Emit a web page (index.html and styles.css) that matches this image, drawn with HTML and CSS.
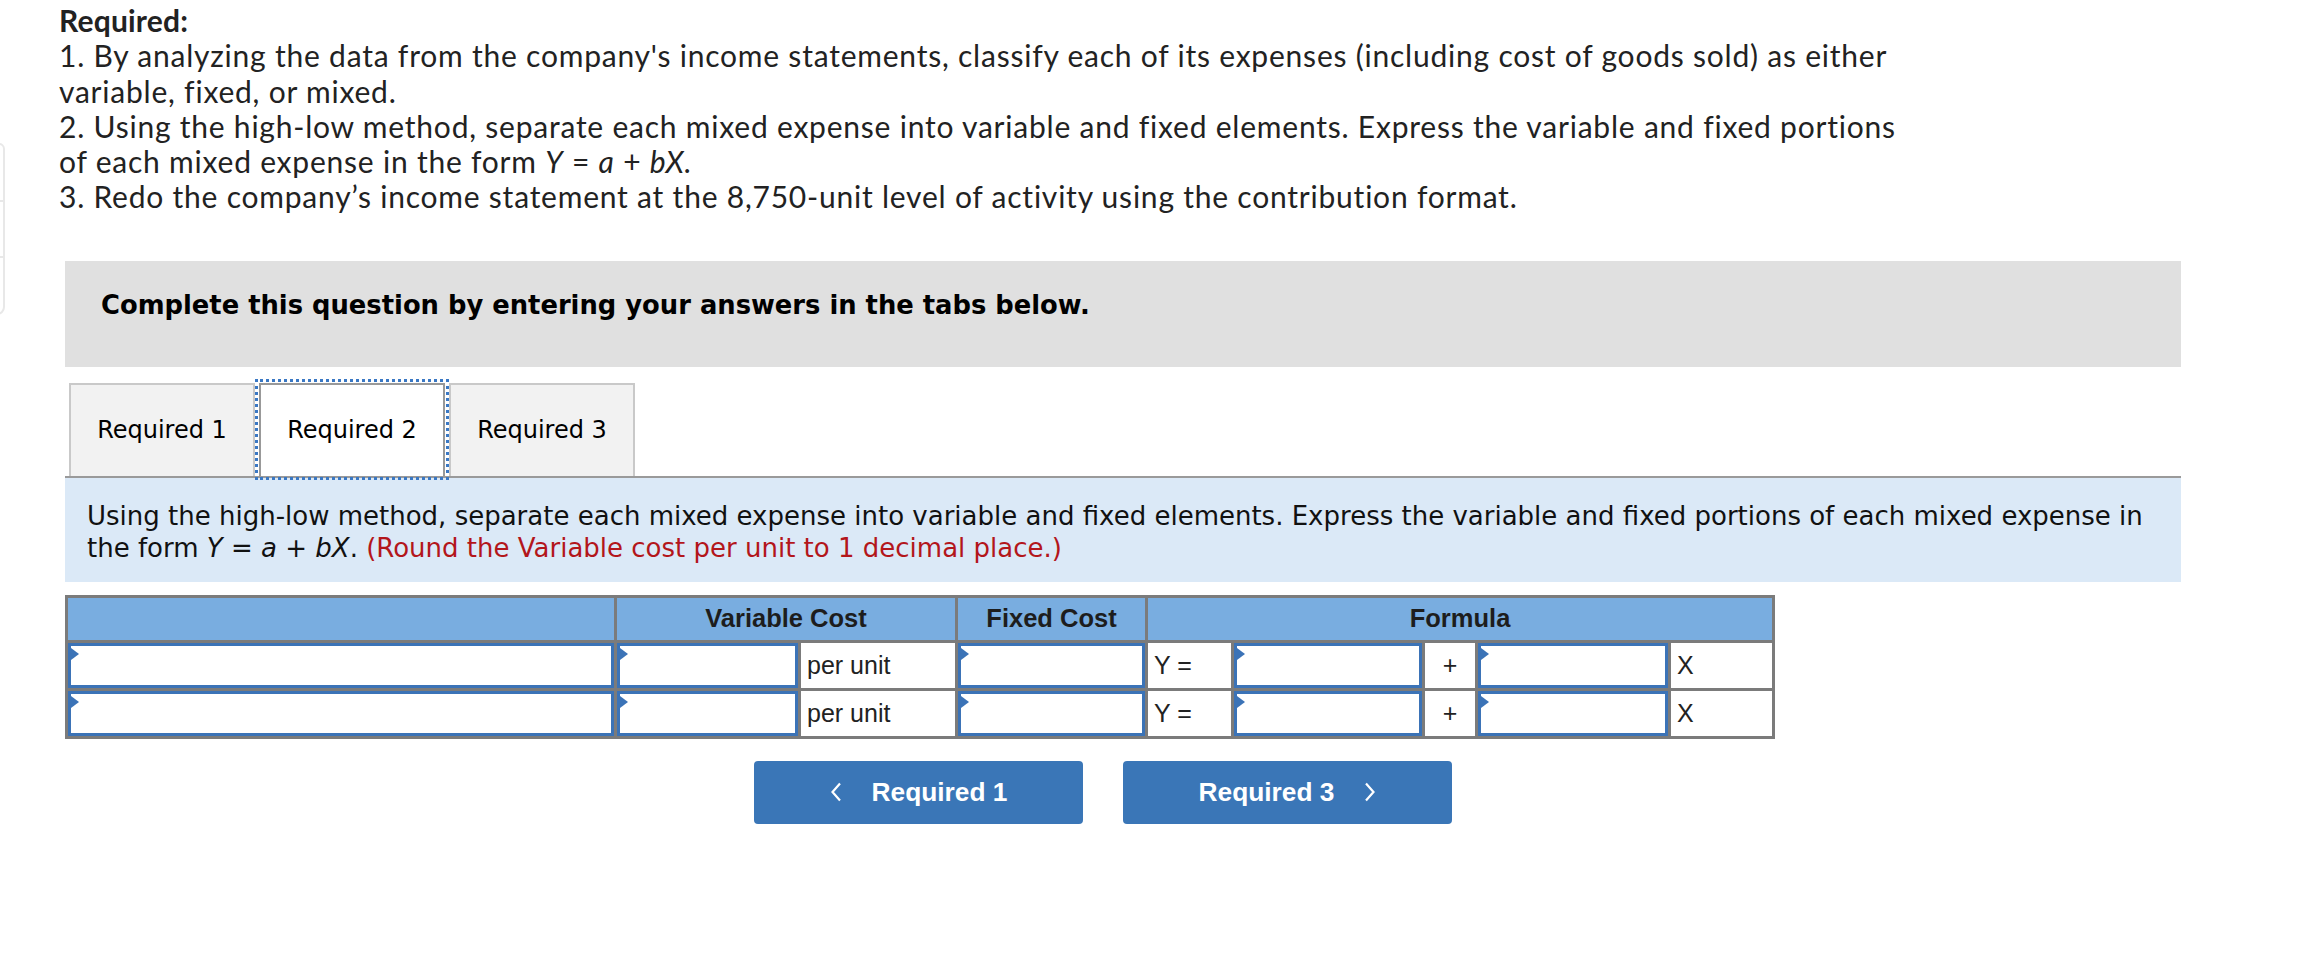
FILE: index.html
```html
<!DOCTYPE html>
<html lang="en">
<head>
<meta charset="utf-8">
<title>Required 2</title>
<link rel="stylesheet" href="styles.css">
</head>
<body>
<div class="edge" aria-hidden="true">
  <div class="edge-row"></div>
  <div class="edge-row"></div>
  <div class="edge-row"></div>
</div>
<main class="page">
  <section class="required">
    <p class="req-title">Required:</p>
    <p class="req-line">1. By analyzing the data from the company's income statements, classify each of its expenses (including cost of goods sold) as either<br>variable, fixed, or mixed.</p>
    <p class="req-line">2. Using the high-low method, separate each mixed expense into variable and fixed elements. Express the variable and fixed portions<br>of each mixed expense in the form <i>Y</i> = <i>a</i> + <i>bX.</i></p>
    <p class="req-line">3. Redo the company’s income statement at the 8,750-unit level of activity using the contribution format.</p>
  </section>

  <div class="prompt-box">Complete this question by entering your answers in the tabs below.</div>

  <div class="tabs">
    <div class="tab">Required 1</div>
    <div class="tab tab-active">Required 2</div>
    <div class="tab">Required 3</div>
  </div>

  <div class="instructions">Using the high-low method, separate each mixed expense into variable and fixed elements. Express the variable and fixed portions of each mixed expense in<br>the form <i>Y</i> = <i>a</i> + <i>bX</i>. <span class="red">(Round the Variable cost per unit to 1 decimal place.)</span></div>

  <table class="grid">
    <colgroup>
      <col class="c1"><col class="c2"><col class="c3"><col class="c4"><col class="c5"><col class="c6"><col class="c7"><col class="c8"><col class="c9">
    </colgroup>
    <thead>
      <tr>
        <th></th>
        <th colspan="2">Variable Cost</th>
        <th>Fixed Cost</th>
        <th colspan="5">Formula</th>
      </tr>
    </thead>
    <tbody>
      <tr>
        <td class="in"><div class="field"></div></td>
        <td class="in"><div class="field"></div></td>
        <td class="lbl">per unit</td>
        <td class="in"><div class="field"></div></td>
        <td class="lbl">Y =</td>
        <td class="in"><div class="field"></div></td>
        <td class="op">+</td>
        <td class="in"><div class="field"></div></td>
        <td class="lbl">X</td>
      </tr>
      <tr>
        <td class="in"><div class="field"></div></td>
        <td class="in"><div class="field"></div></td>
        <td class="lbl">per unit</td>
        <td class="in"><div class="field"></div></td>
        <td class="lbl">Y =</td>
        <td class="in"><div class="field"></div></td>
        <td class="op">+</td>
        <td class="in"><div class="field"></div></td>
        <td class="lbl">X</td>
      </tr>
    </tbody>
  </table>

  <nav class="nav">
    <a class="btn">
      <svg class="chev" width="12" height="20" viewBox="0 0 12 20"><polyline points="10,1.5 2.5,10 10,18.5" fill="none" stroke="#fff" stroke-width="2.2"/></svg>
      <span>Required 1</span>
    </a>
    <a class="btn">
      <span>Required 3</span>
      <svg class="chev" width="12" height="20" viewBox="0 0 12 20"><polyline points="2,1.5 9.5,10 2,18.5" fill="none" stroke="#fff" stroke-width="2.2"/></svg>
    </a>
  </nav>
</main>
</body>
</html>
```

FILE: styles.css
```css
html, body {
  margin: 0;
  padding: 0;
  background: #ffffff;
}

body {
  position: relative;
  width: 2304px;
  min-height: 966px;
  overflow: hidden;
}

.edge {
  position: absolute;
  left: -20px;
  top: 143px;
  width: 21px;
  height: 168px;
  border: 2px solid #e8e8e8;
  border-radius: 0 6px 8px 0;
  display: flex;
  flex-direction: column;
}

.edge-row {
  flex: 1;
}

.edge-row + .edge-row {
  border-top: 2px solid #e8e8e8;
}

.page {
  padding-left: 65px;
  width: 2116px;
}

/* ---------- Required text ---------- */
.required {
  padding-top: 3px;
  margin-left: -6px;
  font-family: Lato, "Open Sans", sans-serif;
  font-size: 30px;
  letter-spacing: 0.78px;
  line-height: 35.3px;
  color: #222222;
}

.required p {
  margin: 0;
  white-space: nowrap;
}

.req-title {
  font-weight: 700;
  letter-spacing: 0.2px;
}

/* ---------- Prompt box ---------- */
.prompt-box {
  margin-top: 46px;
  height: 106px;
  box-sizing: border-box;
  padding: 29px 0 0 36px;
  background: #e0e0e0;
  font-family: "DejaVu Sans", Verdana, sans-serif;
  font-weight: 700;
  font-size: 25.8px;
  line-height: 30px;
  color: #000000;
}

/* ---------- Tabs ---------- */
.tabs {
  margin-top: 16px;
  display: flex;
  gap: 4px;
  padding-left: 4px;
  border-bottom: 2px solid #9a9a9a;
}

.tab {
  width: 186px;
  height: 93px;
  box-sizing: border-box;
  border: 2px solid #c9c9c9;
  border-bottom: none;
  background: #f2f2f2;
  display: flex;
  align-items: center;
  justify-content: center;
  font-family: "DejaVu Sans", Verdana, sans-serif;
  font-size: 24px;
  color: #000000;
}

.tab-active {
  background: #ffffff;
  border-color: #999999;
  outline: 3px dotted #3a78c4;
  outline-offset: 1px;
}

/* ---------- Instructions ---------- */
.instructions {
  padding: 22px 20px 18px 22px;
  background: #dbe9f7;
  font-family: "DejaVu Sans", Verdana, sans-serif;
  font-size: 26px;
  line-height: 32px;
  color: #111111;
  white-space: nowrap;
}

.red {
  color: #b3161b;
}

/* ---------- Table ---------- */
.grid {
  margin-top: 13px;
  border-collapse: collapse;
  table-layout: fixed;
  width: 1707px;
  border: 3px solid #7b7b7b;
  font-family: "Liberation Sans", Arial, sans-serif;
  color: #222222;
}

.c1 { width: 549px; }
.c2 { width: 184px; }
.c3 { width: 157px; }
.c4 { width: 190px; }
.c5 { width: 86px; }
.c6 { width: 191px; }
.c7 { width: 53px; }
.c8 { width: 193px; }
.c9 { width: 104px; }

.grid th {
  height: 42px;
  padding: 0;
  background: #79ade0;
  border: 3px solid #7b7b7b;
  font-size: 25.5px;
  font-weight: 700;
  color: #1d1d1d;
  text-align: center;
}

.grid td {
  height: 45px;
  padding: 0;
  border: 3px solid #7b7b7b;
  font-size: 25px;
}

.grid td.lbl {
  padding-left: 6px;
  text-align: left;
}

.grid td.op {
  text-align: center;
}

.field {
  position: relative;
  height: 45px;
  box-sizing: border-box;
  border: 3px solid #3b73b7;
  background: #ffffff;
}

.field::before {
  content: "";
  position: absolute;
  top: 2px;
  left: 0;
  border-left: 8px solid #3b73b7;
  border-top: 6px solid transparent;
  border-bottom: 6px solid transparent;
}

/* ---------- Nav buttons ---------- */
.nav {
  margin-top: 22px;
  padding-left: 689px;
  display: flex;
  gap: 40px;
}

.btn {
  width: 329px;
  height: 63px;
  box-sizing: border-box;
  background: #3a76b7;
  border-radius: 4px;
  display: flex;
  align-items: center;
  justify-content: center;
  gap: 30px;
  color: #ffffff;
  font-family: "Liberation Sans", Arial, sans-serif;
  font-weight: 700;
  font-size: 26.3px;
  cursor: pointer;
}

.chev {
  display: block;
}
```
